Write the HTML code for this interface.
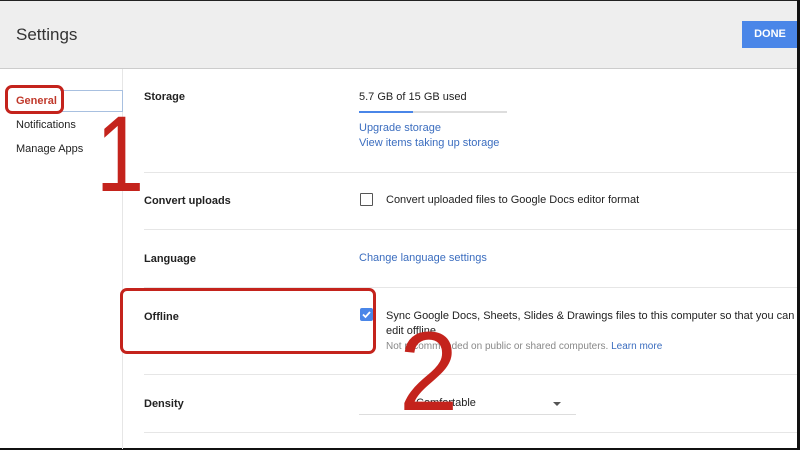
<!DOCTYPE html>
<html><head><style>
*{margin:0;padding:0;box-sizing:border-box}
body{width:800px;height:450px;overflow:hidden;background:#fff;font-family:"Liberation Sans",Arial,sans-serif;position:relative;color:#222}
.a{position:absolute;white-space:nowrap}
.hdr{position:absolute;left:0;top:0;width:800px;height:69px;background:#eeeeee;border-top:1px solid #222;border-bottom:1px solid #ccc}
.lbl{font-size:11px;font-weight:bold;color:#222}
.t{font-size:11px;color:#222}
.lnk{font-size:11px;color:#3b6dbf}
.hr{position:absolute;left:144px;width:653px;height:1px;background:#e6e6e6}
.big{position:absolute;color:#c4231c;font-family:"Liberation Sans",sans-serif;font-size:108px;line-height:1;transform-origin:left top}
</style></head><body>
<div class="hdr"></div>
<div class="a" style="left:16px;top:25px;font-size:17px;color:#333">Settings</div>
<div class="a" style="left:742px;top:21px;width:58px;height:27px;background:#4a86e8;color:#fff;font-size:11px;font-weight:bold;text-align:center;line-height:27px;padding-right:2px">DONE</div>
<div style="position:absolute;left:797px;top:0;width:3px;height:450px;background:#111"></div>
<div style="position:absolute;left:0;top:448px;width:800px;height:2px;background:#111"></div>
<div style="position:absolute;left:122px;top:69px;width:1px;height:380px;background:#e6e6e6"></div>
<div style="position:absolute;left:60px;top:90px;width:63px;height:22px;border:1px solid #a8c0e0;border-left:none"></div>
<div class="a" style="left:16px;top:95px;font-size:11px;color:#c0392b;font-weight:bold">General</div>
<div style="position:absolute;left:5px;top:85px;width:59px;height:29px;border:3px solid #c4231c;border-radius:7px"></div>
<div class="a t" style="left:16px;top:119px">Notifications</div>
<div class="a t" style="left:16px;top:143px">Manage Apps</div>
<div class="big" style="left:96px;top:100px;transform:scaleX(0.8)">1</div>

<div class="a lbl" style="left:144px;top:91px">Storage</div>
<div class="a t" style="left:359px;top:91px">5.7 GB of 15 GB used</div>
<div style="position:absolute;left:359px;top:111px;width:148px;height:2px;background:#ddd"></div>
<div style="position:absolute;left:359px;top:111px;width:54px;height:2px;background:#4a86e8"></div>
<div class="a lnk" style="left:359px;top:122px">Upgrade storage</div>
<div class="a lnk" style="left:359px;top:137px">View items taking up storage</div>
<div class="hr" style="top:172px"></div>

<div class="a lbl" style="left:144px;top:195px">Convert uploads</div>
<div style="position:absolute;left:360px;top:193px;width:13px;height:13px;border:1.5px solid #555;border-radius:1px"></div>
<div class="a t" style="left:386px;top:194px">Convert uploaded files to Google Docs editor format</div>
<div class="hr" style="top:229px"></div>

<div class="a lbl" style="left:144px;top:311px">Offline</div>
<div class="a lbl" style="left:144px;top:253px">Language</div>
<div class="a lnk" style="left:359px;top:252px">Change language settings</div>
<div class="hr" style="top:287px"></div>

<div style="position:absolute;left:360px;top:308px;width:13px;height:13px;background:#4a86e8;border-radius:2px"></div>
<svg class="a" style="left:360px;top:308px" width="13" height="13"><path d="M3 6.5l2.5 2.5 4.5-5" stroke="#fff" stroke-width="1.8" fill="none"/></svg>
<div class="a t" style="left:386px;top:310px">Sync Google Docs, Sheets, Slides &amp; Drawings files to this computer so that you can</div>
<div class="a t" style="left:386px;top:325px">edit offline</div>
<div class="a" style="left:386px;top:341px;font-size:10px;color:#888">Not recommended on public or shared computers. <span style="color:#3b6dbf">Learn more</span></div>
<div style="position:absolute;left:120px;top:288px;width:256px;height:66px;border:3px solid #c4231c;border-radius:7px"></div>
<div class="hr" style="top:374px"></div>

<div class="a lbl" style="left:144px;top:398px">Density</div>
<div class="a t" style="left:416px;top:397px">Comfortable</div>
<div style="position:absolute;left:553px;top:402px;border-left:4px solid transparent;border-right:4px solid transparent;border-top:4px solid #555"></div>
<div style="position:absolute;left:359px;top:414px;width:217px;height:1px;background:#ddd"></div>
<div class="hr" style="top:432px"></div>
<div class="big" style="left:399px;top:316px;font-size:112px;transform:scaleX(0.95)">2</div>
</body></html>
